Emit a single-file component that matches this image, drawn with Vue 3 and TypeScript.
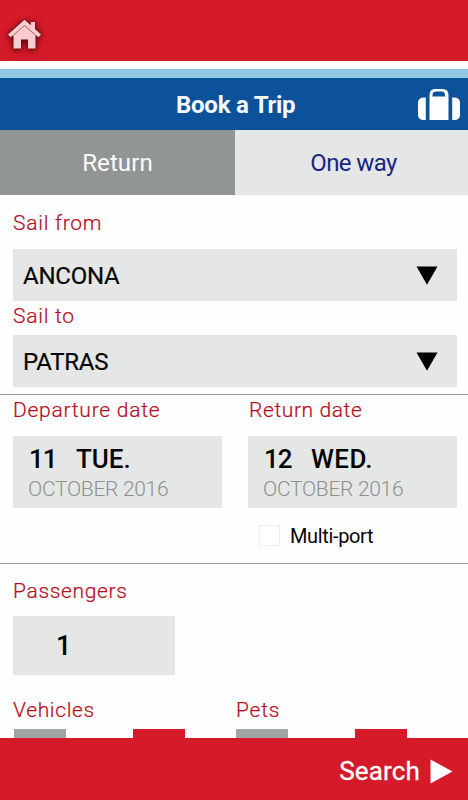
<script setup lang="ts">
import { ref } from 'vue'

type Trip = 'return' | 'oneway'
const trip = ref<Trip>('return')
const multiPort = ref(false)

const ports = [
  { id: 'from', label: 'Sail from', value: 'ANCONA' },
  { id: 'to', label: 'Sail to', value: 'PATRAS' },
]
const dates = [
  { id: 'departure', label: 'Departure date', day: '11', weekday: 'TUE.', month: 'OCTOBER 2016' },
  { id: 'back', label: 'Return date', day: '12', weekday: 'WED.', month: 'OCTOBER 2016' },
]
const extras = ['Vehicles', 'Pets']
</script>

<template>
  <div class="screen">
    <header class="top">
      <svg class="home" viewBox="0 0 40 40" width="40" height="40">
        <path d="M17.5 0.7 L1 15.5 L3.4 18.2 L6.5 16 V29.5 H14 V20.5 H21 V29.5 H28.5 V16 L31.6 18.2 L34 15.5 L28 10.1 V3 H23.8 V6.3 Z" />
        <path class="eave" d="M6.5 16 L17.5 6.5 L28.5 16" />
      </svg>
    </header>
    <div class="stripe"></div>
    <div class="title-bar">
      <h1 class="title">Book a Trip</h1>
      <svg class="case" viewBox="0 0 44 34" width="44" height="34">
        <path d="M7 9.5 H8.800 V32 H7 Q1 32 1 27 V15 Q1 9.5 7 9.5 Z" />
        <path d="M35.200 9.5 H37 Q43 9.5 43 15 V27 Q43 32 37 32 H35.200 Z" />
        <path fill-rule="evenodd" d="M12.500 32 V7 Q12.500 1 18 1 H25.5 Q31.500 1 31.500 7 V32 Z M15.500 8.600 H28 V7.300 Q28 3.600 24.500 3.600 H19 Q15.500 3.600 15.500 7.300 Z" />
      </svg>
    </div>

    <nav class="tabs">
      <button class="tab t-return" :class="{ active: trip === 'return' }" @click="trip = 'return'">Return</button>
      <button class="tab t-oneway" :class="{ active: trip === 'oneway' }" @click="trip = 'oneway'">One way</button>
    </nav>

    <section class="ports">
      <div v-for="p in ports" :key="p.id" class="port" :class="p.id">
        <span class="label">{{ p.label }}</span>
        <div class="select">
          <span class="port-name">{{ p.value }}</span>
          <svg viewBox="0 0 22 19" width="22" height="19"><path d="M0.500 0.500 H21.500 L11 18.800 Z" /></svg>
        </div>
      </div>
    </section>

    <section class="schedule">
      <div class="dates">
        <div v-for="d in dates" :key="d.id" class="date" :class="d.id">
          <span class="label">{{ d.label }}</span>
          <div class="date-box">
            <div class="day"><span class="num">{{ d.day }}</span><span class="weekday">{{ d.weekday }}</span></div>
            <div class="month">{{ d.month }}</div>
          </div>
        </div>
      </div>
      <div class="multi" @click="multiPort = !multiPort">
        <span class="check" :class="{ on: multiPort }"></span>
        <span class="multi-text">Multi-port</span>
      </div>
    </section>

    <section class="people">
      <span class="label passengers">Passengers</span>
      <div class="count">1</div>
      <div class="extras">
        <div v-for="e in extras" :key="e" class="extra">
          <span class="label" :class="e.toLowerCase()">{{ e }}</span>
          <div class="stepper"><i class="minus"></i><i class="plus"></i></div>
        </div>
      </div>
    </section>

    <footer class="bottom">
      <span class="search">Search</span>
      <svg viewBox="0 0 23 25" width="23" height="25"><path d="M0.500 0.500 L22.500 12.500 L0.500 24.500 Z" /></svg>
    </footer>
  </div>
</template>

<style>
body {
  margin: 0;
  background: #fff;
}
</style>

<style scoped>
.screen {
  display: flex;
  flex-direction: column;
  width: 468px;
  height: 800px;
  overflow: hidden;
  background: #fefefe;
  font-family: Roboto, "Liberation Sans", sans-serif;
  color: #050505;
  white-space: nowrap;
}
.screen * {
  box-sizing: border-box;
}
.top {
  flex: none;
  height: 61px;
  padding: 19px 0 0 7px;
  background: #d51a29;
}
.home {
  display: block;
  overflow: visible;
  fill: #f9cdd0;
  filter: drop-shadow(0 0 1px #6a0810) drop-shadow(0 1px 3px #4a0008);
}
.home .eave {
  fill: none;
  stroke: #a8606a;
  stroke-width: 1;
}
.stripe {
  flex: none;
  height: 17px;
  border-top: 8px solid #fff;
  background: #8fc9e6;
}
.title-bar {
  flex: none;
  display: flex;
  align-items: center;
  justify-content: space-between;
  height: 52px;
  padding: 0 7px 0 176px;
  background: #0b529b;
}
.title {
  margin: 0;
  padding-top: 2px;
  font-size: 24px;
  font-weight: 700;
  line-height: 30px;
  letter-spacing: -0.25px;
  color: #f4fafd;
}
.case {
  fill: #fcfeff;
  margin-top: 2px;
}
.tabs {
  flex: none;
  display: grid;
  grid-template-columns: 235px 1fr;
  height: 65px;
}
.tab {
  margin: 0;
  padding: 1px 0 0;
  border: 0;
  background: #e5e7e6;
  font: 400 24px/30px Roboto, sans-serif;
  color: #182583;
}
.tab.active {
  background: #919594;
  color: #fbfbfb;
}
.t-return {
  letter-spacing: 0.1px;
}
.t-oneway {
  padding-left: 4px;
  letter-spacing: -0.6px;
}
.label {
  display: block;
  width: max-content;
  font-size: 21px;
  font-weight: 300;
  line-height: 24px;
  letter-spacing: 0.75px;
  color: #b50d1d;
  -webkit-text-stroke: 0.2px #b50d1d;
}
.back .label {
  margin-left: 1px;
  letter-spacing: 0.6px;
}
.ports {
  flex: none;
  height: 200px;
  padding: 16px 11px 0 13px;
  border-bottom: 1px solid #999;
}
.port.from .label {
  margin-bottom: 14px;
}
.port.to .label {
  margin: 3px 0 7px;
}
.select {
  display: flex;
  align-items: center;
  justify-content: space-between;
  height: 52px;
  padding: 0 19px 0 10px;
  background: #e5e7e6;
}
.port-name {
  padding-top: 1px;
  font-size: 24px;
  line-height: 28px;
  letter-spacing: -0.25px;
  -webkit-text-stroke: 0.2px #050505;
}
.schedule {
  flex: none;
  height: 169px;
  padding: 3px 11px 0 13px;
  border-bottom: 1px solid #999;
}
.dates {
  display: grid;
  grid-template-columns: 209px 209px;
  gap: 26px;
}
.date-box {
  height: 72px;
  margin-top: 14px;
  padding: 8px 15px 0;
  background: #e5e7e6;
}
.day {
  display: flex;
  padding-left: 1px;
  font-size: 26px;
  font-weight: 500;
  line-height: 31px;
}
.num {
  width: 47px;
  letter-spacing: -1px;
}
.back .weekday {
  letter-spacing: 0.4px;
}
.month {
  margin-top: 2px;
  font-size: 21px;
  font-weight: 300;
  line-height: 24px;
  letter-spacing: -0.3px;
  color: #8c8f8f;
}
.multi {
  display: flex;
  align-items: center;
  gap: 10px;
  margin: 16px 0 0 246px;
}
.check {
  width: 21px;
  height: 21px;
  border: 1px solid #ececec;
  background: #fff;
}
.check.on {
  background: #0b529b;
}
.multi-text {
  padding-top: 1px;
  font-size: 20px;
  line-height: 22px;
  letter-spacing: -0.35px;
}
.people {
  flex: 1;
  min-height: 0;
  overflow: hidden;
  padding: 15px 0 0 13px;
}
.count {
  width: 162px;
  height: 59px;
  margin: 13px 0 23px;
  padding-left: 43px;
  background: #e6e6e6;
  font-size: 27px;
  font-weight: 500;
  line-height: 61px;
}
.passengers,
.vehicles {
  letter-spacing: 0.65px;
}
.extras {
  display: grid;
  grid-template-columns: 171px 171px;
  gap: 52px;
}
.stepper {
  display: flex;
  justify-content: space-between;
  margin-top: 7px;
}
.vehicles + .stepper {
  margin-left: 1px;
  margin-right: -1px;
}
.stepper i {
  width: 52px;
  height: 52px;
}
.minus {
  background: #a0a5a5;
}
.plus {
  background: #d51a29;
}
.bottom {
  flex: none;
  display: flex;
  align-items: center;
  justify-content: flex-end;
  gap: 10px;
  height: 62px;
  padding: 4px 15px 0 0;
  background: #d51a29;
}
.bottom svg {
  fill: #fff;
}
.search {
  font-size: 26px;
  line-height: 30px;
  letter-spacing: 0.15px;
  color: #fff;
  -webkit-text-stroke: 0.3px #fff;
}
</style>
